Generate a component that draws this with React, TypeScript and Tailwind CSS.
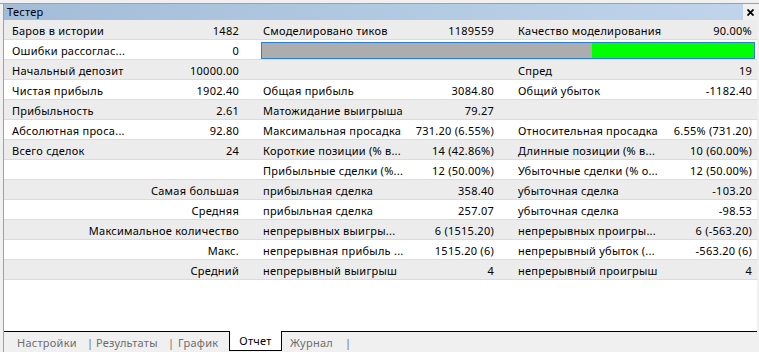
import React from "react";

type Row = {
  c: [string, string, string, string, string, string];
  progress?: boolean;
};

const rows: Row[] = [
  { c: ["Баров в истории", "1482", "Смоделировано тиков", "1189559", "Качество моделирования", "90.00%"] },
  { c: ["Ошибки рассоглас...", "0", "", "", "", ""], progress: true },
  { c: ["Начальный депозит", "10000.00", "", "", "Спред", "19"] },
  { c: ["Чистая прибыль", "1902.40", "Общая прибыль", "3084.80", "Общий убыток", "-1182.40"] },
  { c: ["Прибыльность", "2.61", "Матожидание выигрыша", "79.27", "", ""] },
  { c: ["Абсолютная проса...", "92.80", "Максимальная просадка", "731.20 (6.55%)", "Относительная просадка", "6.55% (731.20)"] },
  { c: ["Всего сделок", "24", "Короткие позиции (% в...", "14 (42.86%)", "Длинные позиции (% в...", "10 (60.00%)"] },
  { c: ["", "", "Прибыльные сделки (%...", "12 (50.00%)", "Убыточные сделки (% о...", "12 (50.00%)"] },
  { c: ["", "Самая большая", "прибыльная сделка", "358.40", "убыточная сделка", "-103.20"] },
  { c: ["", "Средняя", "прибыльная сделка", "257.07", "убыточная сделка", "-98.53"] },
  { c: ["", "Максимальное количество", "непрерывных выигры...", "6 (1515.20)", "непрерывных проигры...", "6 (-563.20)"] },
  { c: ["", "Макс.", "непрерывная прибыль ...", "1515.20 (6)", "непрерывный убыток (...", "-563.20 (6)"] },
  { c: ["", "Средний", "непрерывный выигрыш", "4", "непрерывный проигрыш", "4"] },
];

function TableRow({ row, idx }: { row: Row; idx: number }) {
  const bg = idx % 2 === 0 ? "bg-[#ececec]" : "bg-white";
  const c = row.c;
  return (
    <div
      className={`${bg} h-[20px] border-b border-[#dcdcdc] grid grid-cols-[132px_109px_165px_90px_165px_92px] items-center leading-[19px] pt-[1px]`}
    >
      <div className="pl-[8px] whitespace-nowrap overflow-hidden">{c[0]}</div>
      <div className="pr-[6px] text-right whitespace-nowrap flex justify-end">
        <span className="whitespace-nowrap">{c[1]}</span>
      </div>
      {row.progress ? (
        <div className="col-span-4 pl-[16px] pr-[2px] flex items-center -mt-[1px]">
          <div className="h-[17px] w-full border border-[#2a7fd6] flex">
            <div className="w-[330px] bg-[#adadad]" />
            <div className="flex-1 bg-[#00ff00]" />
          </div>
        </div>
      ) : (
        <>
          <div className="pl-[18px] whitespace-nowrap overflow-hidden">{c[2]}</div>
          <div className="pr-[6px] text-right whitespace-nowrap">{c[3]}</div>
          <div className="pl-[18px] whitespace-nowrap overflow-hidden">{c[4]}</div>
          <div className="pr-[5px] text-right whitespace-nowrap">{c[5]}</div>
        </>
      )}
    </div>
  );
}

export default function App() {
  return (
    <div
      className="w-[759px] h-[352px] bg-[#f0f0f0] flex flex-col overflow-hidden text-[11px] tracking-[0.25px] text-black"
      style={{ fontFamily: '"Noto Sans", "Liberation Sans", sans-serif' }}
    >
      <div className="h-[4px] border-b border-[#a0a0a0] shrink-0" />
      <div className="flex-1 flex flex-col ml-[3px] border-l border-[#a0a0a0] mr-[2px] min-h-0">
        <div className="h-[16px] shrink-0 flex items-center bg-gradient-to-r from-[#a3bcd8] to-[#c0d5ec] pl-[3px] leading-[16px]">
          <span>Тестер</span>
          <div className="flex-1" />
          <div className="w-[14px] h-[16px] bg-[#f0f0f0] flex items-center justify-center">
            <svg width="7" height="7" viewBox="0 0 7 7">
              <path d="M0.5 0.5 L6.5 6.5 M6.5 0.5 L0.5 6.5" stroke="#000" strokeWidth="1.8" />
            </svg>
          </div>
        </div>
        <div className="flex flex-col shrink-0">
          {rows.map((r, i) => (
            <TableRow key={i} row={r} idx={i} />
          ))}
        </div>
        <div className="flex-1 bg-white" />
        <div className="h-[21px] shrink-0 border-t border-black flex items-stretch text-[#6d6d6d] leading-[19px]">
          <div className="w-[13px]" />
          <div className="w-[70px] flex items-center">Настройки</div>
          <div className="w-[9px] flex items-center">|</div>
          <div className="w-[72px] flex items-center">Результаты</div>
          <div className="w-[10px] flex items-center">|</div>
          <div className="w-[51px] flex items-center">График</div>
          <div className="w-[53px] -mt-[1px] h-[20px] bg-white border-l border-r border-b border-black flex items-center justify-center text-black">
            Отчет
          </div>
          <div className="w-[8px]" />
          <div className="w-[55px] flex items-center">Журнал</div>
          <div className="flex items-center">|</div>
        </div>
      </div>
    </div>
  );
}
